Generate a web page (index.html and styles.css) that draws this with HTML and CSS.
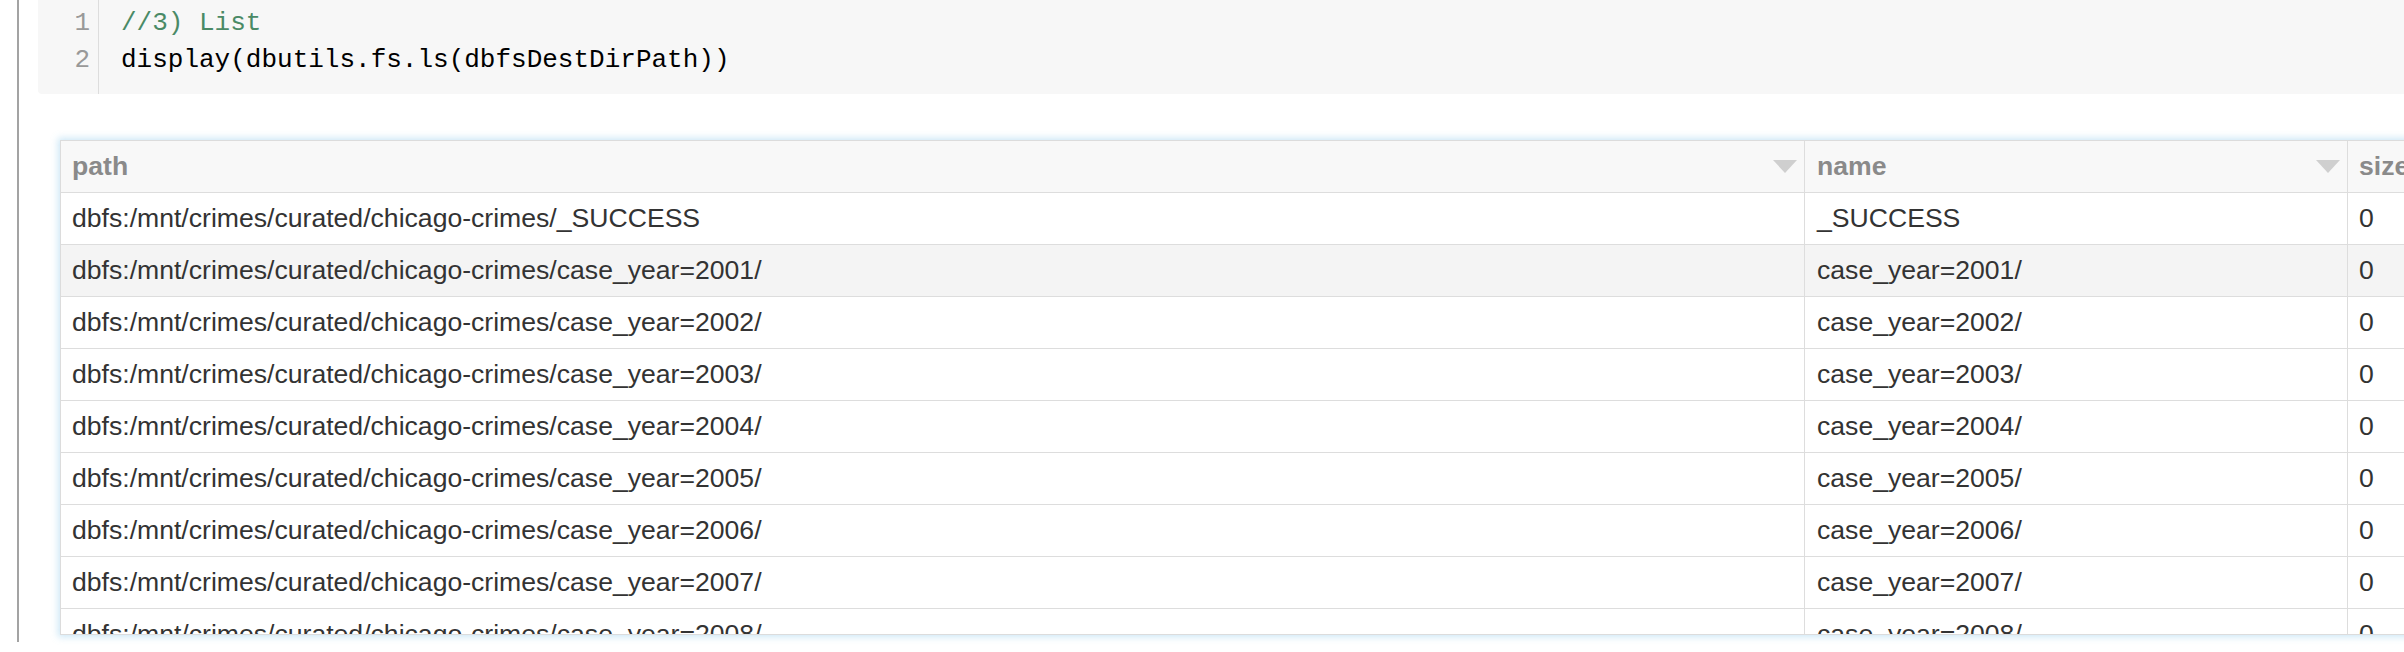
FILE: index.html
```html
<!DOCTYPE html>
<html>
<head>
<meta charset="utf-8">
<link rel="stylesheet" href="styles.css">
</head>
<body>
<div class="cell">
  <div class="code">
    <div class="gutter">
      <div class="num">1</div>
      <div class="num">2</div>
    </div>
    <div class="lines">
      <div class="line"><span class="comment">//3) List</span></div>
      <div class="line">display(dbutils.fs.ls(dbfsDestDirPath))</div>
    </div>
  </div>
  <div class="result">
    <div class="grid">
      <div class="row head">
        <div class="c c-path"><span class="hd">path</span><span class="caret"></span></div>
        <div class="c c-name"><span class="hd">name</span><span class="caret"></span></div>
        <div class="c c-size"><span class="hd">size</span><span class="caret"></span></div>
      </div>
      <div class="row"><div class="c c-path">dbfs:/mnt/crimes/curated/chicago-crimes/_SUCCESS</div><div class="c c-name">_SUCCESS</div><div class="c c-size">0</div></div>
      <div class="row hover"><div class="c c-path">dbfs:/mnt/crimes/curated/chicago-crimes/case_year=2001/</div><div class="c c-name">case_year=2001/</div><div class="c c-size">0</div></div>
      <div class="row"><div class="c c-path">dbfs:/mnt/crimes/curated/chicago-crimes/case_year=2002/</div><div class="c c-name">case_year=2002/</div><div class="c c-size">0</div></div>
      <div class="row"><div class="c c-path">dbfs:/mnt/crimes/curated/chicago-crimes/case_year=2003/</div><div class="c c-name">case_year=2003/</div><div class="c c-size">0</div></div>
      <div class="row"><div class="c c-path">dbfs:/mnt/crimes/curated/chicago-crimes/case_year=2004/</div><div class="c c-name">case_year=2004/</div><div class="c c-size">0</div></div>
      <div class="row"><div class="c c-path">dbfs:/mnt/crimes/curated/chicago-crimes/case_year=2005/</div><div class="c c-name">case_year=2005/</div><div class="c c-size">0</div></div>
      <div class="row"><div class="c c-path">dbfs:/mnt/crimes/curated/chicago-crimes/case_year=2006/</div><div class="c c-name">case_year=2006/</div><div class="c c-size">0</div></div>
      <div class="row"><div class="c c-path">dbfs:/mnt/crimes/curated/chicago-crimes/case_year=2007/</div><div class="c c-name">case_year=2007/</div><div class="c c-size">0</div></div>
      <div class="row"><div class="c c-path">dbfs:/mnt/crimes/curated/chicago-crimes/case_year=2008/</div><div class="c c-name">case_year=2008/</div><div class="c c-size">0</div></div>
    </div>
  </div>
</div>
</body>
</html>
```
FILE: styles.css
```css
html, body {
  margin: 0;
  padding: 0;
  background: #ffffff;
  overflow: hidden;
  width: 2404px;
  height: 652px;
}

.cell {
  margin-left: 17px;
  border-left: 2px solid #a3a3a3;
  height: 652px;
  padding-left: 19px;
  box-sizing: border-box;
}

.code {
  display: flex;
  background: #f7f7f7;
  border-radius: 4px;
  margin-top: -10px;
  padding-top: 15px;
  padding-bottom: 15px;
  width: 2600px;
  font-family: "Liberation Mono", "DejaVu Sans Mono", monospace;
  font-size: 26px;
  line-height: 37px;
}

.gutter {
  width: 52px;
  padding-right: 8px;
  border-right: 1px solid #dddddd;
  text-align: right;
  color: #999999;
  margin-top: -15px;
  padding-top: 15px;
  margin-bottom: -15px;
  padding-bottom: 15px;
}

.lines {
  padding-left: 22px;
  color: #000000;
}

.comment {
  color: #4a8a66;
}

.result {
  margin-top: 46px;
  margin-left: 22px;
  width: 2700px;
  height: 495px;
  box-sizing: border-box;
  border: 1px solid #dcdcdc;
  overflow: hidden;
  box-shadow: 0 0 7px 2px rgba(110, 185, 230, 0.35);
  font-family: "Liberation Sans", Arial, sans-serif;
  font-size: 26.6px;
  color: #333333;
}

.row {
  display: flex;
  height: 52px;
  box-sizing: border-box;
  border-bottom: 1px solid #dddddd;
  background: #ffffff;
}

.row.head {
  background: #f8f8f8;
}

.row.hover {
  background: #f4f4f4;
}

.c {
  display: flex;
  align-items: center;
  box-sizing: border-box;
  padding-left: 11px;
  padding-right: 7px;
  border-right: 1px solid #dddddd;
  white-space: nowrap;
}

.c-path { width: 1744px; }
.c-name { width: 543px; padding-left: 12px; }
.c-size { width: 400px; }

.hd {
  font-weight: bold;
  color: #8a8a8a;
  flex: 1;
}

.caret {
  width: 0;
  height: 0;
  border-left: 12.5px solid transparent;
  border-right: 12.5px solid transparent;
  border-top: 13px solid #cfcfcf;
}
```
